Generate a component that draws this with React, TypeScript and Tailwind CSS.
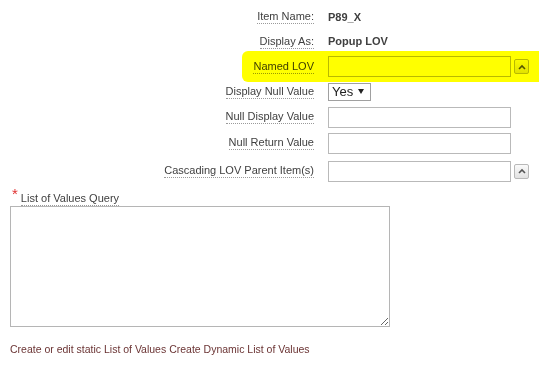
import { ReactNode } from 'react';

const font = { fontFamily: '"Liberation Sans", Arial, sans-serif' };

function Label({ children }: { children: ReactNode }) {
  return (
    <span className="border-b border-dotted border-[#9a9a9a] leading-[13px] text-[11px] text-[#404040]">
      {children}
    </span>
  );
}

function PopupButton() {
  return (
    <button className="ml-[3px] flex h-[15px] w-[15px] items-center justify-center rounded-[2px] border border-[#b8b8b8] bg-gradient-to-b from-[#fafafa] to-[#e2e2e2]">
      <svg width="8" height="6" viewBox="0 0 8 6">
        <path d="M1 5 L4 2 L7 5" fill="none" stroke="#555" strokeWidth="1.6" />
      </svg>
    </button>
  );
}

function Row({ label, h, children }: { label: ReactNode; h: string; children: ReactNode }) {
  return (
    <div className={`flex items-center ${h}`}>
      <div className="flex w-[314px] justify-end">{label}</div>
      <div className="ml-[14px] flex items-center">{children}</div>
    </div>
  );
}

export default function App() {
  const input = 'h-[21px] w-[183px] border border-[#b9b9b9] bg-white';
  return (
    <div className="relative h-[365px] w-[539px] overflow-hidden bg-white" style={font}>
      <div className="flex flex-col pt-[5px]">
        <Row label={<Label>Item Name:</Label>} h="h-[24px]">
          <span className="text-[11px] font-bold text-[#404040]">P89_X</span>
        </Row>
        <Row label={<Label>Display As:</Label>} h="h-[25px]">
          <span className="text-[11px] font-bold text-[#404040]">Popup LOV</span>
        </Row>
        <Row label={<Label>Named LOV</Label>} h="h-[25px]">
          <div className={input} />
          <PopupButton />
        </Row>
        <Row label={<Label>Display Null Value</Label>} h="h-[25px]">
          <div className="flex h-[18px] w-[43px] items-center justify-between border border-[#a0a0a0] bg-white pl-[3px] pr-[6px] text-[13px] text-[#222]">
            <span>Yes</span>
            <svg width="6" height="5" viewBox="0 0 6 5">
              <path d="M0 0 L6 0 L3 5 Z" fill="#222" />
            </svg>
          </div>
        </Row>
        <Row label={<Label>Null Display Value</Label>} h="h-[26px]">
          <div className={input} />
        </Row>
        <Row label={<Label>Null Return Value</Label>} h="h-[26px]">
          <div className={input} />
        </Row>
        <Row label={<Label>Cascading LOV Parent Item(s)</Label>} h="h-[30px]">
          <div className={input} />
          <PopupButton />
        </Row>
      </div>

      <div className="ml-[12px] mt-[2px] flex h-[18px] items-start">
        <span className="text-[15px] leading-[12px] text-[#e03030]">*</span>
        <div className="ml-[3px] mt-[4px] flex">
          <Label>List of Values Query</Label>
        </div>
      </div>
      <textarea
        className="ml-[10px] block h-[121px] w-[380px] border border-[#b5b5b5] bg-white"
        readOnly
      />

      <div className="ml-[10px] mt-[15px] text-[10.5px] leading-[14px] text-[#6b3434]">
        Create or edit static List of Values Create Dynamic List of Values
      </div>

      {/* marker highlight */}
      <div className="pointer-events-none absolute left-[242px] top-[51px] h-[31px] w-[300px] rounded-l-[6px] rounded-br-[4px] bg-[#ffff00] mix-blend-multiply" />
    </div>
  );
}
